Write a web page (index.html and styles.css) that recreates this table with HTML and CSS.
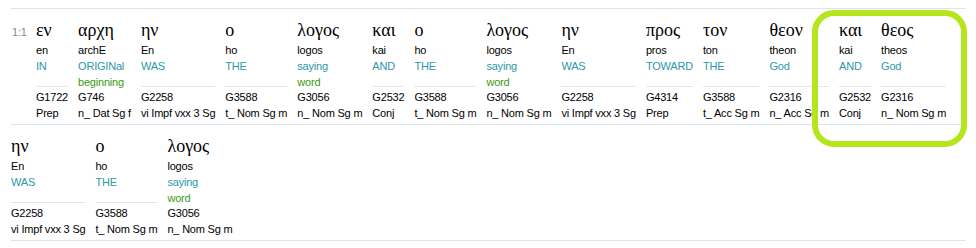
FILE: index.html
```html
<!DOCTYPE html>
<html lang="en">
<head>
<meta charset="utf-8">
<title>Interlinear John 1:1</title>
<link rel="stylesheet" href="styles.css">
</head>
<body>
<div class="page">
  <div class="line">
    <div class="ref">1:1</div>
    <div class="w"><div class="gk">εν</div><div class="tr">en</div><div class="gl"><div class="en">IN</div></div><div class="st">G1722</div><div class="ps">Prep</div></div>
    <div class="w"><div class="gk">αρχη</div><div class="tr">archE</div><div class="gl two"><div class="en">ORIGINal</div><div class="alt">beginning</div></div><div class="st">G746</div><div class="ps">n_ Dat Sg f</div></div>
    <div class="w"><div class="gk">ην</div><div class="tr">En</div><div class="gl"><div class="en">WAS</div></div><div class="st">G2258</div><div class="ps">vi Impf vxx 3 Sg</div></div>
    <div class="w"><div class="gk">ο</div><div class="tr">ho</div><div class="gl"><div class="en">THE</div></div><div class="st">G3588</div><div class="ps">t_ Nom Sg m</div></div>
    <div class="w"><div class="gk">λογος</div><div class="tr">logos</div><div class="gl two"><div class="en">saying</div><div class="alt">word</div></div><div class="st">G3056</div><div class="ps">n_ Nom Sg m</div></div>
    <div class="w"><div class="gk">και</div><div class="tr">kai</div><div class="gl"><div class="en">AND</div></div><div class="st">G2532</div><div class="ps">Conj</div></div>
    <div class="w"><div class="gk">ο</div><div class="tr">ho</div><div class="gl"><div class="en">THE</div></div><div class="st">G3588</div><div class="ps">t_ Nom Sg m</div></div>
    <div class="w"><div class="gk">λογος</div><div class="tr">logos</div><div class="gl two"><div class="en">saying</div><div class="alt">word</div></div><div class="st">G3056</div><div class="ps">n_ Nom Sg m</div></div>
    <div class="w"><div class="gk">ην</div><div class="tr">En</div><div class="gl"><div class="en">WAS</div></div><div class="st">G2258</div><div class="ps">vi Impf vxx 3 Sg</div></div>
    <div class="w"><div class="gk">προς</div><div class="tr">pros</div><div class="gl"><div class="en">TOWARD</div></div><div class="st">G4314</div><div class="ps">Prep</div></div>
    <div class="w"><div class="gk">τον</div><div class="tr">ton</div><div class="gl"><div class="en">THE</div></div><div class="st">G3588</div><div class="ps">t_ Acc Sg m</div></div>
    <div class="w"><div class="gk">θεον</div><div class="tr">theon</div><div class="gl"><div class="en">God</div></div><div class="st">G2316</div><div class="ps">n_ Acc Sg m</div></div>
    <div class="w"><div class="gk">και</div><div class="tr">kai</div><div class="gl"><div class="en">AND</div></div><div class="st">G2532</div><div class="ps">Conj</div></div>
    <div class="w"><div class="gk">θεος</div><div class="tr">theos</div><div class="gl"><div class="en">God</div></div><div class="st">G2316</div><div class="ps">n_ Nom Sg m</div></div>
  </div>
  <div class="line last">
    <div class="w"><div class="gk">ην</div><div class="tr">En</div><div class="gl"><div class="en">WAS</div></div><div class="st">G2258</div><div class="ps">vi Impf vxx 3 Sg</div></div>
    <div class="w"><div class="gk">ο</div><div class="tr">ho</div><div class="gl"><div class="en">THE</div></div><div class="st">G3588</div><div class="ps">t_ Nom Sg m</div></div>
    <div class="w"><div class="gk">λογος</div><div class="tr">logos</div><div class="gl two"><div class="en">saying</div><div class="alt">word</div></div><div class="st">G3056</div><div class="ps">n_ Nom Sg m</div></div>
  </div>
  <div class="mark"></div>
</div>
</body>
</html>
```

FILE: styles.css
```css
html, body {
  margin: 0;
  padding: 0;
  background: #ffffff;
}

.page {
  position: relative;
  padding: 8px 0 0 11px;
  width: 955px;
  font-family: "Liberation Sans", Arial, sans-serif;
  font-size: 11px;
  letter-spacing: -0.2px;
  color: #000000;
}

.line {
  display: flex;
  align-items: flex-start;
  border-top: 1px solid #dde3f1;
  padding: 9px 0 3px 0;
}

.line.last {
  border-bottom: 1px solid #dde3f1;
}

.ref {
  flex: 0 0 25px;
  padding-left: 1px;
  box-sizing: border-box;
  margin-top: 2px;
  line-height: 24px;
  color: #8d84a0;
}

.w {
  flex: 0 0 auto;
  margin-right: 10px;
  white-space: nowrap;
}

.gk {
  font-family: "Liberation Serif", "Times New Roman", serif;
  font-size: 18px;
  letter-spacing: 0;
  line-height: 24px;
  height: 24px;
}

.tr,
.en,
.alt,
.st,
.ps {
  line-height: 16px;
  height: 16px;
}

.gl {
  height: 28px;
  border-bottom: 1px solid #e2ebe2;
  margin-bottom: 2px;
}

.gl.two {
  border-bottom-color: transparent;
}

.en {
  color: #2c98a8;
}

.alt {
  color: #3a9a12;
}

.mark {
  position: absolute;
  left: 812px;
  top: 10px;
  width: 155px;
  height: 137px;
  box-sizing: border-box;
  border: 6px solid #b5e61d;
  border-radius: 22px;
}
```
